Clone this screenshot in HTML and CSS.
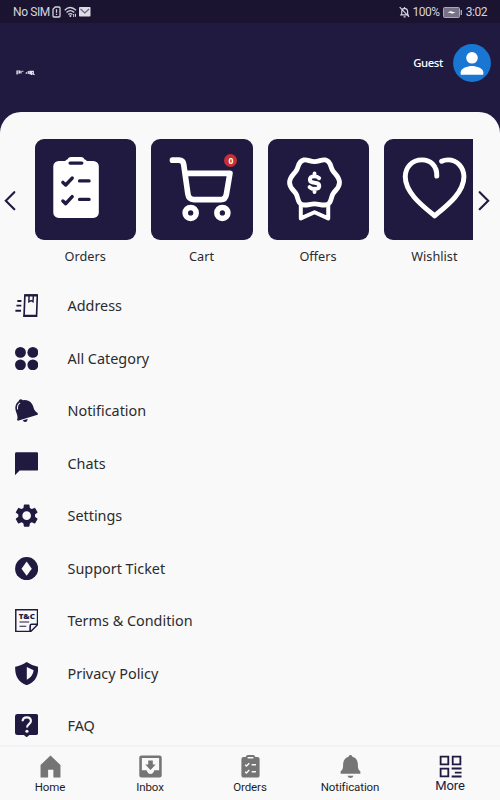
FILE: index.html
```html
<!DOCTYPE html>
<html lang="en">
<head>
<meta charset="UTF-8">
<meta name="viewport" content="width=device-width, initial-scale=1.0">
<title>More</title>
<link rel="stylesheet" href="styles.css">
</head>
<body>

<div class="status-bar">
    <div class="status-left">
        <span>No SIM</span>
        <svg class="sim-icon" viewBox="0 0 9 12"><path d="M3.2 1H7q1 0 1 1v8q0 1-1 1H2q-1 0-1-1V3.2z" fill="none" stroke="#d6d3de" stroke-width="1.3"/><path d="M4.5 3.3v3.4M4.5 7.8v1.3" stroke="#d6d3de" stroke-width="1.3"/></svg>
        <svg class="wifi-icon" viewBox="0 0 13 12"><g fill="none" stroke="#d6d3de" stroke-width="1.3"><path d="M.7 4.2q5.3-5.4 11.4 0M2.5 6.4q3.8-3.5 7.8 0M4.3 8.4q2-1.6 4.1 0"/><path d="M9.7 8v3M11.5 7.8v3" stroke-width="1"/></g><circle cx="6.4" cy="10" r="1.1" fill="#d6d3de"/></svg>
        <svg class="mail-icon" viewBox="0 0 12 10"><rect width="11.5" height="9.5" rx=".8" fill="#dedce4"/><path d="M1.5 2l4.3 4L10 2" fill="none" stroke="#66617a" stroke-width="1.1"/></svg>
    </div>
    <div class="status-right">
        <svg class="mute-icon" viewBox="0 0 11 12"><path d="M2.6 8.8h6V5.2Q8.4 2.5 5.6 2.3 3 2.5 2.8 5.2L2.6 8.8 1 9h9M5.5 1v1.2M4.6 10.8h2M.7 1.2l9.4 9.6" fill="none" stroke="#d6d3de" stroke-width="1.2"/></svg>
        <span>100%</span>
        <svg class="battery-icon" viewBox="0 0 20 11"><rect x=".5" y=".5" width="16" height="10" rx="1" fill="#777286" stroke="#aaa6b5"/><path d="M18.3 3v5" stroke="#aaa6b5" stroke-width="1.4"/><path d="M4.5 5.5l4-1.7v1l4 .5-4 1.8v-1z" fill="#fff"/></svg>
        <span>3:02</span>
    </div>
</div>

<div class="header">
    <svg class="logo" viewBox="0 0 19 6"><path d="M1 .5v4M1 1h2.5v2H1M5 .8v2.7M6.3 1.3h1M10 3.8l.7-1.6M12.3 1v3M13.8 .8v3.5M15 1.3h2.3v2.6H15zM15.5 2v3M17.3 4.5h1.4" fill="none" stroke="#e6e4ee" stroke-width="1.2"/></svg>
    <div class="user">
        <span>Guest</span>
        <svg class="avatar" viewBox="0 0 38 38"><circle cx="19" cy="19" r="18.9" fill="#1976d2"/><circle cx="19" cy="13.8" r="5.8" fill="#fff"/><path d="M7.7 30.8v-2.6c0-4.1 7.2-6.3 11.3-6.3s11.3 2.2 11.3 6.3v2.6z" fill="#fff"/></svg>
    </div>
</div>

<div class="content">
    <div class="carousel">
        <svg class="arrow" viewBox="0 0 12 20"><path d="M10.3 1.2L1.8 9.7l8.5 8.5" fill="none" stroke="#211a40" stroke-width="2.1" stroke-linecap="round"/></svg>
        <div class="tiles">
            <div class="tile">
                <svg viewBox="0 0 102 102">
                    <rect x="18.4" y="22" width="45.8" height="57.3" rx="5.5" fill="#fff"/>
                    <path d="M30.5 26v-3.5q0-1.8 2-2 1.2-2.5 4-2.5h9.5q2.8 0 4 2.5 2 .2 2 2V26z" fill="#fff"/>
                    <g fill="none" stroke="#211a40" stroke-linecap="round" stroke-linejoin="round"><path d="M35.3 24.1h11.8M44.8 42.1h9.6M44.8 60.7h9.6" stroke-width="3.3"/><path d="M28.1 43.6l2.8 2.6 6.5-7M28.1 62.3l2.8 2.6 6.5-7" stroke-width="3.5"/></g>
                </svg>
                <span class="tile-label">Orders</span>
            </div>
            <div class="tile">
                <svg viewBox="0 0 102 102">
                    <g fill="none" stroke="#fff" stroke-width="5.7" stroke-linecap="round" stroke-linejoin="round"><path d="M21.6 21.2h6.6q4.1 0 4.7 4.3l4.2 29.7q.8 5.7 6 5.7h27q4.8 0 5.7-5.2l3.6-21.2H34.5"/><circle cx="39.9" cy="74.3" r="5.5"/><circle cx="71.8" cy="74.3" r="5.5"/></g>
                </svg>
                <span class="badge">0</span>
                <span class="tile-label">Cart</span>
            </div>
            <div class="tile">
                <svg viewBox="0 0 102 102">
                    <g fill="none" stroke="#fff" stroke-width="4.9" stroke-linejoin="round"><path d="M46.8 22.7C42 22.7 40 20.3 36 21c-5.5 1-5.2 6.7-7.3 10.3-2.4 4.2-7 6.4-7 12.4s4.6 7.6 6.8 11.8C30.6 60 30 65.6 36 66.3c4 .4 6-1.1 10.8-1.1s6.8 1.5 10.8 1.1c6-.7 5.4-6.3 7.5-10.8 2.2-4.2 6.8-5.8 6.8-11.8s-4.6-8.2-7-12.4C62.8 27.7 63.1 22 57.6 21c-4-.7-6 1.7-10.8 1.7z"/><path d="M33 65.5v14.3l13.8-6.2 13.8 6.2V65.5" stroke-width="4"/><path d="M51.5 39.4q-2-1.9-4.7-1.9-4.7 0-4.7 3.2 0 3 4.7 3.2 4.8.2 4.8 3.3 0 3-4.8 3-3 0-5-2M46.8 34.5v3M46.8 50v3.3" stroke-linecap="round" stroke-width="3.9"/></g>
                </svg>
                <span class="tile-label">Offers</span>
            </div>
            <div class="tile">
                <svg viewBox="0 0 102 102">
                    <path d="M53.1 37.2C53.5 27 47 20.9 38.2 20.9 28 20.9 21.4 28.5 21.4 38c0 16.5 18.5 30 29.5 39.2C62 68 80.4 54.5 80.4 38c0-9.5-6.7-17.1-16-17.1q-3.6 0-6.4 1.4" fill="none" stroke="#fff" stroke-width="5" stroke-linecap="round" stroke-linejoin="round"/>
                </svg>
                <span class="tile-label">Wishlist</span>
            </div>
        </div>
        <svg class="arrow" viewBox="0 0 12 20"><path d="M1.7 1.2l8.5 8.5-8.5 8.5" fill="none" stroke="#211a40" stroke-width="2.1" stroke-linecap="round"/></svg>
    </div>

    <div class="menu">
        <div class="menu-item">
            <svg viewBox="0 0 24 24"><path d="M10.2 1.2H23L22.2 22.8H9.3z" fill="none" stroke="#211a40" stroke-width="1.7"/><path d="M14.5 1l-.2 7 2.3-1.3 1.9 1.3L19 1" fill="none" stroke="#211a40" stroke-width="1.5"/><path d="M8.8 22.4h13.5M10 1.3h13" stroke="#211a40" stroke-width="2.3"/><path d="M2.4 7.2h4.2M1.5 12h5M.4 17.2h5.8" stroke="#211a40" stroke-width="2"/></svg>
            <span>Address</span>
        </div>
        <div class="menu-item">
            <svg viewBox="0 0 24 24"><circle cx="5.6" cy="5.6" r="5.6"/><circle cx="18.4" cy="5.6" r="5.6"/><circle cx="5.6" cy="18.4" r="5.6"/><circle cx="18.4" cy="18.4" r="5.6"/></svg>
            <span>All Category</span>
        </div>
        <div class="menu-item">
            <svg viewBox="0 0 24 24"><path d="M3.7 2.4Q4.2 0 6.4.2l1.7 1q6.5-.6 9.6 4.2c2 3.3 1.2 6 5.2 8.8q1.1.9.4 2L3 22.4q-1.2-.2-.7-1.7C3.6 16.7.2 13.6.3 9.1Q.5 4.7 3.7 2.4zM8 22l5-1.5q-.2 3.2-2.8 3.2-1.4-.1-2.2-1.7z"/><path d="M2.7 10.6Q1.9 6 5.3 4" fill="none" stroke="#f9f9fa" stroke-width="1.1"/></svg>
            <span>Notification</span>
        </div>
        <div class="menu-item">
            <svg viewBox="0 0 24 24"><path d="M1.5.2h21q1.4 0 1.4 1.4v16q0 1.5-1.4 1.5H4.8L0 23.9V1.7Q0 .2 1.5.2z"/></svg>
            <span>Chats</span>
        </div>
        <div class="menu-item">
            <svg viewBox="2 2 20 20"><path d="M19.14 12.94c.04-.3.06-.61.06-.94 0-.32-.02-.64-.07-.94l2.03-1.58c.18-.14.23-.41.12-.61l-1.92-3.32c-.12-.22-.37-.29-.59-.22l-2.39.96c-.5-.38-1.03-.7-1.62-.94l-.36-2.54c-.04-.24-.24-.41-.48-.41h-3.84c-.24 0-.43.17-.47.41l-.36 2.54c-.59.24-1.13.57-1.62.94l-2.39-.96c-.22-.08-.47 0-.59.22L2.74 8.87c-.12.21-.08.47.12.61l2.03 1.58c-.05.3-.09.63-.09.94s.02.64.07.94l-2.03 1.58c-.18.14-.23.41-.12.61l1.92 3.32c.12.22.37.29.59.22l2.39-.96c.5.38 1.03.7 1.62.94l.36 2.54c.05.24.24.41.48.41h3.84c.24 0 .44-.17.47-.41l.36-2.54c.59-.24 1.13-.56 1.62-.94l2.39.96c.22.08.47 0 .59-.22l1.92-3.32c.12-.22.07-.47-.12-.61zM12 15.7a3.7 3.7 0 1 1 0-7.4 3.7 3.7 0 0 1 0 7.4z"/></svg>
            <span>Settings</span>
        </div>
        <div class="menu-item">
            <svg viewBox="0 0 24 24"><circle cx="12" cy="12" r="11.9"/><path d="M12 4.7l5.3 7.3-5.3 7.3L6.7 12z" fill="#f9f9fa"/></svg>
            <span>Support Ticket</span>
        </div>
        <div class="menu-item">
            <svg viewBox="0 0 24 24"><path d="M.8.8h22.4v15.4l-7 7H.8z" fill="none" stroke="#211a40" stroke-width="1.5"/><path d="M15.6 23v-5.6q0-1.7 1.7-1.7H23" fill="none" stroke="#211a40" stroke-width="1.7"/><path d="M4.6 13.4h10M4.6 17.8h7" stroke="#211a40" stroke-width="1.2"/><text class="tc-text" x="12.2" y="9.8" text-anchor="middle" textLength="16.5" lengthAdjust="spacingAndGlyphs">T&amp;C</text></svg>
            <span>Terms &amp; Condition</span>
        </div>
        <div class="menu-item">
            <svg viewBox="0 0 24 24"><path d="M12 .1q5.2 3.7 11.8 4.8C24.3 14 20.8 20.8 12 23.9 3.2 20.8-.3 14 .2 4.9 6.8 3.8 12 .1 12 .1z"/><path d="M12.2 5.2l7 3.4q-.7 6.4-7 9.7z" fill="#f9f9fa"/></svg>
            <span>Privacy Policy</span>
        </div>
        <div class="menu-item">
            <svg viewBox="0 0 24 24"><path d="M2.5 0h19Q24 0 24 2.5v16.7q0 2.4-2.5 2.4h-6.6L12 24l-2.9-2.4H2.5Q0 21.6 0 19.2V2.5Q0 0 2.5 0z"/><path d="M7.8 7.5Q8 3.5 12.2 3.5t4.2 3.8c0 3.1-4.1 3.3-4.1 6.7" fill="none" stroke="#f9f9fa" stroke-width="2.2"/><circle cx="12.3" cy="17.8" r="1.6" fill="#f9f9fa"/></svg>
            <span>FAQ</span>
        </div>
    </div>
</div>

<div class="bottom-nav">
    <div class="nav-item">
        <svg viewBox="0 0 24 24"><path d="M12 .5l10.4 10V23.4h-7.4v-8h-5.5v8H1.6V10.5z"/></svg>
        <span>Home</span>
    </div>
    <div class="nav-item">
        <svg viewBox="0 0 24 24"><path fill-rule="evenodd" d="M2.5.4h19q2.2 0 2.2 2.2v18.8q0 2.2-2.2 2.2h-19Q.3 23.6.3 21.4V2.6Q.3.4 2.5.4zM3 3v13h5q1 3.8 4 3.8t4-3.8h5V3z"/><path d="M9.6 5.8h4.8V10h3L12 15.6 6.6 10h3z"/></svg>
        <span>Inbox</span>
    </div>
    <div class="nav-item">
        <svg viewBox="0 0 24 24"><path d="M4.8 2.2H7Q7.4 0 9.4 0h5.2Q16.6 0 17 2.2h2.2q2.3 0 2.3 2.3v16.8q0 2.3-2.3 2.3H4.8q-2.3 0-2.3-2.3V4.5q0-2.3 2.3-2.3z"/><path d="M9 2.8h6M6.4 10.2l1.4 1.3 2.9-3M6.4 17.4l1.4 1.3 2.9-3M13.2 10.2h4.5M13.2 17.4h4.5" fill="none" stroke="#f9f9fa" stroke-width="1.5"/></svg>
        <span>Orders</span>
    </div>
    <div class="nav-item">
        <svg viewBox="0 0 24 24"><path d="M12 0q1.8 0 2 1.8C18 2.8 19.7 6 19.7 10c0 4 .5 5.3 2.6 7.2v2.3H1.7v-2.3C3.8 15.3 4.3 14 4.3 10 4.3 6 6 2.8 10 1.8 10.2 0 12 0 12 0zM8.8 21.6h6.4q-1 2.3-3.2 2.3t-3.2-2.3z"/></svg>
        <span>Notification</span>
    </div>
    <div class="nav-item active">
        <svg viewBox="0 0 24 24"><path d="M1.7 1.7h8v8h-8zM14.3 1.7h8v8h-8zM1.7 14.3h8v8h-8zM13.2 14.1h10.3M16.5 18.3h7M13.2 22.4h10.3" fill="none" stroke="#211a40" stroke-width="1.9"/></svg>
        <span>More</span>
    </div>
</div>

</body>
</html>
```
FILE: styles.css
```css
body {
    font-family: "Noto Sans", sans-serif;
    background-color: #211a40;
    color: #2b2b2d;
    margin: 0;
    height: 800px;
    display: flex;
    flex-direction: column;
    overflow: hidden;
}

svg {
    display: block;
    flex-shrink: 0;
}

/* Status bar */
.status-bar {
    height: 23px;
    box-sizing: border-box;
    padding: 1px 13px 0;
    background-color: #1b1431;
    color: #d6d3de;
    font-family: Roboto, sans-serif;
    font-size: 12px;
    line-height: 22px;
    display: flex;
    justify-content: space-between;
}

.status-left,
.status-right {
    display: flex;
    align-items: center;
}

.status-left span {
    letter-spacing: -0.4px;
}

.status-right span {
    letter-spacing: -0.45px;
}

.sim-icon {
    width: 9px;
    height: 12px;
    margin-left: 2px;
}

.wifi-icon {
    width: 13px;
    height: 12px;
    margin-left: 3px;
}

.mail-icon {
    width: 12px;
    height: 10px;
    margin-left: 2px;
}

.mute-icon {
    width: 11px;
    height: 12px;
    margin-right: 2px;
}

.battery-icon {
    width: 20px;
    height: 11px;
    margin: 0 3px;
}

/* Header */
.header {
    height: 89px;
    box-sizing: border-box;
    padding: 21px 9px 0 16px;
    display: flex;
    justify-content: space-between;
}

.logo {
    width: 19px;
    height: 6px;
    margin-top: 25.5px;
}

.user {
    height: 38px;
    display: flex;
    align-items: center;
    gap: 10px;
    color: #fff;
    font-size: 11.3px;
    font-weight: 500;
}

.user span {
    margin-top: -1px;
    letter-spacing: -0.35px;
}

.avatar {
    width: 38px;
    height: 38px;
}

.content {
    flex: 1;
    min-height: 0;
    overflow: hidden;
    background-color: #f9f9fa;
    border-radius: 21px 21px 0 0;
}

/* Carousel */
.carousel {
    display: flex;
    padding: 26.7px 10px 0 4px;
}

.arrow {
    width: 12px;
    height: 20px;
    margin-top: 52px;
}

.tiles {
    flex: 1;
    display: flex;
    gap: 15px;
    margin: 0 5px 0 19px;
    overflow: hidden;
}

.tile {
    position: relative;
    flex: 0 0 101.4px;
    text-align: center;
}

.tile svg {
    width: 101.4px;
    height: 101.6px;
    border-radius: 9px;
    background-color: #211a40;
}

.tile-label {
    display: block;
    margin-top: 7px;
    margin-right: 1px;
    font-size: 12.7px;
    line-height: 18px;
}

.badge {
    position: absolute;
    top: 15px;
    left: 73px;
    width: 13px;
    height: 13px;
    border-radius: 50%;
    background-color: #c62f35;
    color: #fff;
    font-size: 8.5px;
    font-weight: bold;
    line-height: 13px;
}

/* Menu list */
.menu {
    padding: 14.3px 15px 0;
}

.menu-item {
    height: 52.5px;
    display: flex;
    align-items: center;
    gap: 29.2px;
    font-size: 14.4px;
}

.menu-item svg {
    width: 23.3px;
    height: 23.3px;
    fill: #211a40;
}

.tc-text {
    font-family: "Noto Sans", sans-serif;
    font-size: 7.6px;
    font-weight: 900;
}

/* Bottom navigation */
.bottom-nav {
    height: 55px;
    box-sizing: border-box;
    border-top: 2px solid #f3f3f6;
    background-color: #f9f9fa;
    display: flex;
}

.nav-item {
    flex: 1;
    padding-top: 8px;
    display: flex;
    flex-direction: column;
    align-items: center;
    color: #1d1d1f;
    font-family: Roboto, sans-serif;
    font-size: 11.5px;
    line-height: 16px;
    letter-spacing: -0.1px;
}

.nav-item svg {
    width: 23px;
    height: 23px;
    margin-bottom: 1px;
    fill: #757575;
}

.nav-item.active {
    color: #211a40;
    font-size: 13px;
}

.nav-item.active span {
    margin-top: -1px;
}
```
